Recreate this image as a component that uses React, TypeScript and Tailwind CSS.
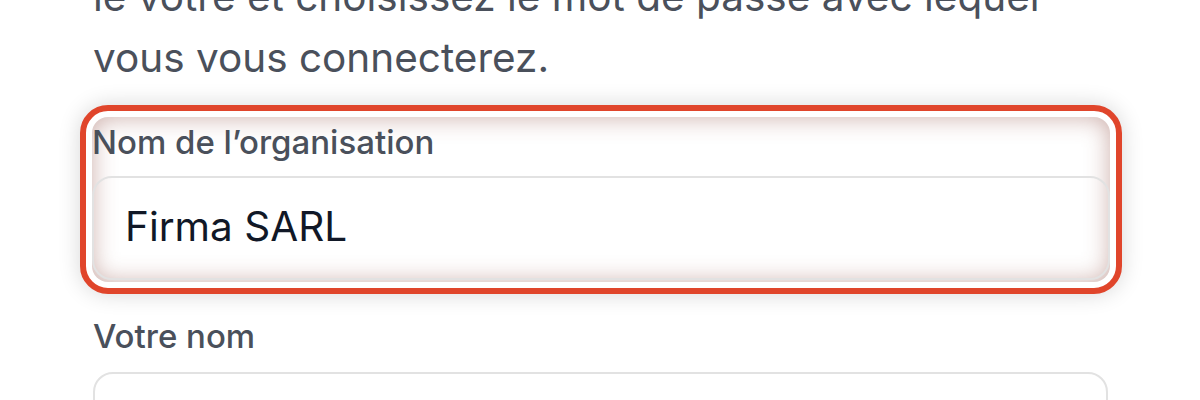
export default function App() {
  return (
    <div className="w-[1200px] h-[400px] overflow-hidden bg-white pl-[93px] pr-[92px] font-['Inter',sans-serif]">
      {/* Intro text (top line cut by the viewport) */}
      <p className="-mt-[33px] text-[40.5px] leading-[60.75px] text-[#4a505b]">
        le votre et choisissez le mot de passe avec lequel
        <br />
        vous vous connecterez.
      </p>

      {/* Highlighted field */}
      <div className="mt-[16px] -ml-[13px] -mr-[14px] rounded-[28px] border-[6px] border-[#e0452b] bg-white p-[6px] shadow-[0_0_22px_rgba(0,0,0,0.16)]">
        <div className="rounded-[16px] pt-[3px] pb-[2px] shadow-[inset_0_0_24px_rgba(140,70,60,0.45)]">
          <label className="block text-[33px] leading-[45px] font-medium text-[#4a505b]">
            Nom de l’organisation
          </label>
          <div className="mt-[11px] flex h-[104px] items-center rounded-[20px] border-2 border-[#e2e2e2] bg-transparent pl-[31px]">
            <span className="text-[40.5px] text-[#111827]">Firma SARL</span>
          </div>
        </div>
      </div>

      {/* Next field */}
      <div className="mt-[20px]">
        <label className="block text-[33px] leading-[45px] font-medium text-[#4a505b]">
          Votre nom
        </label>
        <div className="mt-[13px] h-[104px] rounded-[20px] border-2 border-[#e2e2e2] bg-white" />
      </div>
    </div>
  );
}
